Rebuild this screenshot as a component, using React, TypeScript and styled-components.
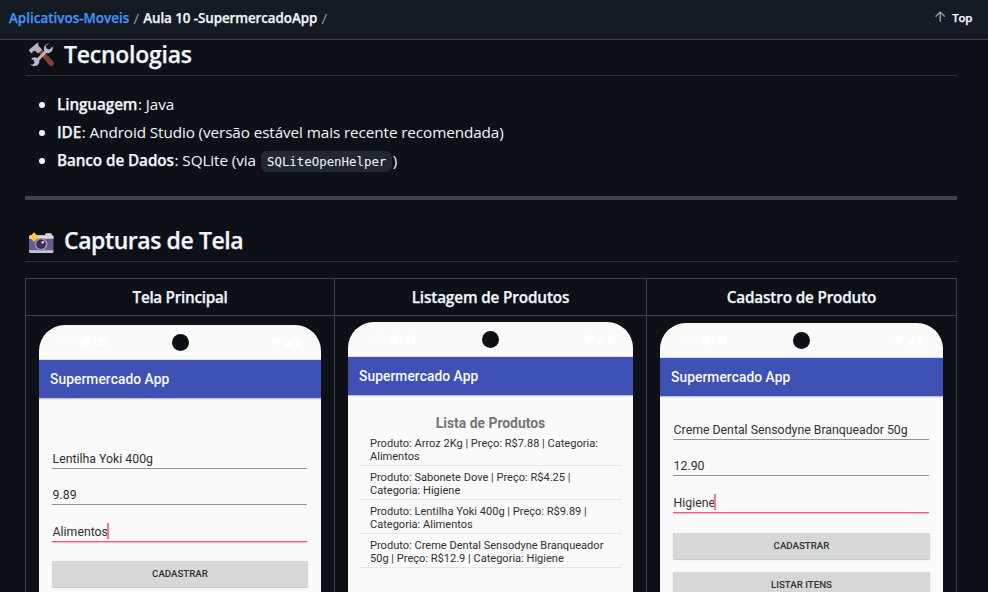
import React from "react";
import styled, { createGlobalStyle } from "styled-components";

const GlobalStyle = createGlobalStyle`
  *, *::before, *::after { box-sizing: border-box; }
  html, body { margin: 0; height: 100%; overflow: hidden; background: #0d1117; }
  body { font-family: "Open Sans", "Noto Sans", sans-serif; color: #f0f6fc; }
`;

const Page = styled.div`
  height: 592px;
  overflow: hidden;
  background: #0d1117;
`;

const Header = styled.header`
  position: relative;
  z-index: 1;
  display: flex;
  justify-content: space-between;
  align-items: center;
  height: 40px;
  padding: 0 16px 3px 9px;
  background: #151b23;
  border-bottom: 1px solid #3d444d;
  font-size: 13.4px;
  line-height: 20px;
`;

const Breadcrumb = styled.nav`
  display: flex;
  font-weight: 600;
`;

const Crumb = styled.a<{ $current?: boolean }>`
  color: ${(p) => (p.$current ? "#f0f6fc" : "#4493f8")};
  letter-spacing: ${(p) => (p.$current ? "-0.08px" : "0.02px")};
  -webkit-text-stroke: 0.25px currentColor;
`;

const Slash = styled.span`
  width: 14px;
  text-align: center;
  font-size: 15px;
  font-weight: 400;
  color: #9198a1;
`;

const TopLink = styled.a`
  display: flex;
  align-items: center;
  gap: 4px;
  font-size: 11.5px;
  font-weight: 600;
  letter-spacing: -0.3px;
  -webkit-text-stroke: 0.25px currentColor;

  svg { fill: #9198a1; margin-top: -2px; }
`;

const Article = styled.article`
  width: 932px;
  margin: -2px 0 0 25px;
`;

const Heading = styled.h2<{ $spacing: string }>`
  display: flex;
  align-items: flex-start;
  gap: 10px;
  height: 38px;
  margin: 0 0 16px;
  padding-left: 3px;
  border-bottom: 1px solid #2f353d;
  font-size: 23px;
  font-weight: 600;
  line-height: 33px;
  letter-spacing: ${(p) => p.$spacing};
  -webkit-text-stroke: 0.25px currentColor;

  svg { flex: none; margin-top: 3px; }
`;

const List = styled.ul`
  margin: 0 0 24px;
  padding: 0 0 0 32px;
  font-size: 15.3px;
  line-height: 24px;
  letter-spacing: -0.11px;
`;

const Item = styled.li`
  height: 24px;
  list-style: none;
  & + & { margin-top: 4px; }
  &::before {
    content: "";
    float: left;
    width: 6px;
    height: 6px;
    margin: 10px 0 0 -18px;
    border-radius: 50%;
    background: #f0f6fc;
  }
`;

const Strong = styled.strong`
  margin-right: 0.7px;
  font-weight: 600;
  letter-spacing: -0.1px;
  -webkit-text-stroke: 0.25px currentColor;
`;

const Code = styled.code`
  margin: 0 0.5px 0 1.5px;
  padding: 3px 5.8px;
  border-radius: 6px;
  background: #212830;
  font-family: "DejaVu Sans Mono", monospace;
  font-size: 12.4px;
  letter-spacing: 0;
`;

const Rule = styled.hr`
  height: 4px;
  margin: 0 0 24px;
  border: 0;
  background: #3d444d;
`;

const Table = styled.div`
  display: grid;
  grid-template-columns: 310px 312px 310px;
  grid-template-rows: 38px 300px;
  border-top: 1px solid #3d444d;
`;

const HeadCell = styled.div<{ $spacing: string }>`
  display: flex;
  justify-content: center;
  height: 37px;
  padding-top: 6px;
  border: solid #3d444d;
  border-width: 0 1px 1px 0;
  font-size: 15.3px;
  font-weight: 600;
  line-height: 24px;
  letter-spacing: ${(p) => p.$spacing};
  -webkit-text-stroke: 0.25px currentColor;
  &:first-child { border-left-width: 1px; }
`;

const BodyCell = styled.div<{ $top: number }>`
  margin-top: -1px;
  padding: ${(p) => p.$top}px 13px 0;
  border: solid #3d444d;
  border-width: 0 1px 0 0;
  &:nth-child(4) { border-left-width: 1px; }
`;

const Phone = styled.div`
  overflow: hidden;
  height: 300px;
  border-radius: 26px 26px 0 0;
  background: #fafafa;
  color: #303030;
  font-family: Roboto, sans-serif;
`;

const StatusBar = styled.div`
  display: grid;
  grid-template-columns: 1fr 17px 1fr;
  align-items: center;
  height: 35px;
  padding: 0 19.5px 1px;
  color: #fff;
  font-size: 9px;
  box-shadow: inset 0 -1px #dddde4;
`;

const StatusGroup = styled.div<{ $end?: boolean }>`
  display: flex;
  align-items: center;
  gap: 5px;
  justify-content: ${(p) => (p.$end ? "flex-end" : "flex-start")};
  svg { fill: #fff; }
`;

const Lens = styled.span`
  width: 17px;
  height: 17px;
  border-radius: 50%;
  background: #0d1117;
`;

const AppBar = styled.div`
  display: flex;
  align-items: center;
  height: 38px;
  padding: 0.5px 0 0 11px;
  background: #3f51b5;
  box-shadow: 0 1px 1px rgba(63, 81, 181, 0.35);
  color: #fafaff;
  font-size: 13.75px;
  font-weight: 500;
  letter-spacing: 0.08px;
`;

const Form = styled.div<{ $top: number }>`
  display: flex;
  flex-direction: column;
  padding: ${(p) => p.$top}px 13px 0;
`;

const Field = styled.div<{ $active?: boolean }>`
  display: flex;
  align-items: flex-end;
  height: ${(p) => (p.$active ? 37 : 36)}px;
  padding: 0 0 1px 0.6px;
  margin-right: 1px;
  border-bottom: 1px solid ${(p) => (p.$active ? "#f4568c" : "#939393")};
  box-shadow: ${(p) => (p.$active ? "0 1px #fbb4cb" : "none")};
  font-size: 12.3px;
  line-height: 16px;
`;

const Caret = styled.i`
  flex: none;
  width: 2px;
  height: 16px;
  margin: 0 0 1px -0.8px;
  background: #ff6f9f;
`;

const ButtonStack = styled.div<{ $gap: number }>`
  display: flex;
  flex-direction: column;
  gap: 13px;
  padding-top: ${(p) => p.$gap}px;
`;

const AndroidButton = styled.div`
  display: flex;
  align-items: center;
  justify-content: center;
  height: 26px;
  padding-bottom: 1px;
  border-radius: 1px;
  background: #d6d8d7;
  box-shadow: 0 1px 1px rgba(0, 0, 0, 0.2), 0 0 1px rgba(0, 0, 0, 0.15);
  font-size: 9.7px;
  font-weight: 500;
`;

const ProductList = styled.div`
  padding: 20px 11px 0;
`;

const ProductTitle = styled.div`
  height: 17px;
  color: #757575;
  font-size: 13.9px;
  font-weight: 700;
  line-height: 17px;
  text-align: center;
`;

const Product = styled.div`
  height: 34px;
  padding: 5px 0 0 11px;
  border-bottom: 1px solid #e6e6e6;
  font-size: 11.06px;
  line-height: 13px;
  white-space: nowrap;
`;

const ToolsIcon = () => (
  <svg width="26" height="28" viewBox="0 0 26 28">
    <path d="M8.5 9 12 6.5 25.2 20.6a2.6 2.6 0 0 1-.2 3.6 2.6 2.6 0 0 1-3.7-.1Z" fill="#83442f" />
    <path d="M8.8 2.2 10.800 1.600l-.7 2 1 2 3 3.100-4.200 3.700-2.600-2.600-2.200.5-1 1.700-.9.2L1 9.700l.2-1.200Z" fill="#bab0c5" />
    <path
      d="M21.5 2.6a5.3 5.3 0 0 0-5.2 7.500L9.400 17.100a5.200 5.200 0 0 0-6.600 1l2.900.9.9 2.700-2 2-2.600-.6a5.200 5.200 0 0 0 9.300-3.800l7.100-7.200a5.400 5.400 0 0 0 6.300-6.700l-3.200 3-3.100-.8-.7-3Z"
      fill="#c0b6ca"
    />
  </svg>
);

const CameraIcon = () => (
  <svg width="26" height="28" viewBox="0 0 26 28">
    <g transform="translate(0 -1.200)">
      <rect x="17" y="7.500" width="7" height="4" rx="1.5" fill="#dedae3" />
      <rect x="1" y="9.5" width="24.5" height="17" rx="2" fill="#6a5795" />
      <path d="M1 13V11q0-1.5 1.5-1.500H24q1.500 0 1.500 1.500v2Z" fill="#dedae3" />
      <path d="M1 24.500h24.5v1.200q0 1.600-1.600 1.600H2.600Q1 27.300 1 25.700Z" fill="#c8c2d0" />
      <circle cx="13" cy="18.500" r="6.300" fill="#9b93a5" />
      <circle cx="13" cy="18.500" r="4.700" fill="#33244f" />
      <circle cx="13" cy="18.500" r="2.700" fill="#463163" />
      <circle cx="14.800" cy="16.500" r="1.200" fill="#f1eafa" />
      <path d="M6 6.500 8.400 9 10.800 11.300 8.400 13.600 6 16 3.600 13.600 1.300 11.300 3.600 9Z" fill="#ffcb3d" />
    </g>
  </svg>
);

const ArrowUpIcon = () => (
  <svg width="16" height="16" viewBox="0 0 16 16">
    <path d="M3.47 7.78a.75.75 0 0 1 0-1.06l4.25-4.25a.75.75 0 0 1 1.06 0l4.25 4.25a.751.751 0 0 1-.018 1.042.751.751 0 0 1-1.042.018L9 4.81v7.44a.75.75 0 0 1-1.5 0V4.81L4.53 7.78a.75.75 0 0 1-1.06 0Z" />
  </svg>
);

const Status = ({ time }: { time: string }) => (
  <StatusBar>
    <StatusGroup>
      {time}
      <svg width="8" height="9" viewBox="0 0 8 9"><path d="M3 0h4q1 0 1 1v7q0 1-1 1H1q-1 0-1-1V3Z" /></svg>
      <svg width="13" height="8" viewBox="-4 0 13 8"><path fillRule="evenodd" d="M1 0h6q1 0 1 1v6q0 1-1 1H1q-1 0-1-1V1q0-1 1-1Zm3 1.500L2 6h1l1-2 1 2h1Z" /></svg>
    </StatusGroup>
    <Lens />
    <StatusGroup $end>
      <svg width="30" height="9" viewBox="0 0 30 9">
        <path d="M0 2q5-4 10 0L5 9ZM11 9l8-8v8ZM24 1h1V0h3v1h1v8h-5Z" />
      </svg>
    </StatusGroup>
  </StatusBar>
);

const Screen = ({ time, children }: { time: string; children: React.ReactNode }) => (
  <Phone>
    <Status time={time} />
    <AppBar>Supermercado App</AppBar>
    {children}
  </Phone>
);

type FormProps = { top: number; gap: number; fields: string[]; buttons: string[] };

const ProductForm = ({ top, gap, fields, buttons }: FormProps) => (
  <Form $top={top}>
    {fields.map((text, i) => {
      const active = i === fields.length - 1;
      return (
        <Field key={text} $active={active}>
          {text}
          {active && <Caret />}
        </Field>
      );
    })}
    <ButtonStack $gap={gap}>
      {buttons.map((label) => (
        <AndroidButton key={label}>{label}</AndroidButton>
      ))}
    </ButtonStack>
  </Form>
);

const products = [
  ["Produto: Arroz 2Kg | Preço: R$7.88 | Categoria:", "Alimentos"],
  ["Produto: Sabonete Dove | Preço: R$4.25 |", "Categoria: Higiene"],
  ["Produto: Lentilha Yoki 400g | Preço: R$9.89 |", "Categoria: Alimentos"],
  ["Produto: Creme Dental Sensodyne Branqueador", "50g | Preço: R$12.9 | Categoria: Higiene"],
];

export default function App() {
  return (
    <Page>
      <GlobalStyle />
      <Header>
        <Breadcrumb>
          <Crumb>Aplicativos-Moveis</Crumb>
          <Slash>/</Slash>
          <Crumb $current>Aula 10 -SupermercadoApp</Crumb>
          <Slash>/</Slash>
        </Breadcrumb>
        <TopLink>
          <ArrowUpIcon />
          Top
        </TopLink>
      </Header>
      <Article>
        <Heading $spacing="-0.24px">
          <ToolsIcon />
          Tecnologias
        </Heading>
        <List>
          <Item><Strong>Linguagem</Strong>: Java</Item>
          <Item><Strong>IDE</Strong>: Android Studio (versão estável mais recente recomendada)</Item>
          <Item><Strong>Banco de Dados</Strong>: SQLite (via <Code>SQLiteOpenHelper</Code>)</Item>
        </List>
        <Rule />
        <Heading $spacing="-0.42px">
          <CameraIcon />
          Capturas de Tela
        </Heading>
        <Table>
          <HeadCell $spacing="-0.3px">Tela Principal</HeadCell>
          <HeadCell $spacing="-0.14px">Listagem de Produtos</HeadCell>
          <HeadCell $spacing="-0.17px">Cadastro de Produto</HeadCell>
          <BodyCell $top={9}>
            <Screen time="1:19">
              <ProductForm top={35} gap={19} fields={["Lentilha Yoki 400g", "9.89", "Alimentos"]} buttons={["CADASTRAR"]} />
            </Screen>
          </BodyCell>
          <BodyCell $top={6}>
            <Screen time="1:39">
              <ProductList>
                <ProductTitle>Lista de Produtos</ProductTitle>
                {products.map(([first, second]) => (
                  <Product key={first}>
                    {first}
                    <br />
                    {second}
                  </Product>
                ))}
              </ProductList>
            </Screen>
          </BodyCell>
          <BodyCell $top={7}>
            <Screen time="1:34">
              <ProductForm
                top={8}
                gap={20}
                fields={["Creme Dental Sensodyne Branqueador 50g", "12.90", "Higiene"]}
                buttons={["CADASTRAR", "LISTAR ITENS"]}
              />
            </Screen>
          </BodyCell>
        </Table>
      </Article>
    </Page>
  );
}
